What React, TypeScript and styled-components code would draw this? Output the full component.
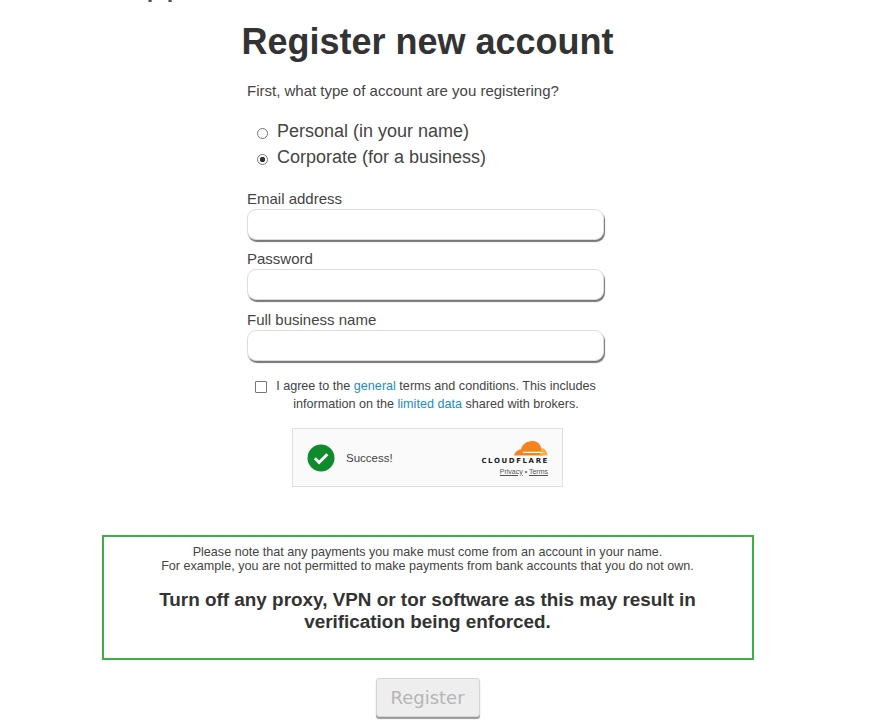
import React from 'react';
import styled, {createGlobalStyle} from "styled-components";

const GlobalStyle = createGlobalStyle`
  html, body {
    margin: 0;
    padding: 0;
    height: 100%;
    overflow: hidden;
    background: #fff;
    font-family: "Liberation Sans", Arial, sans-serif;
    color: #444;
  }
`

function CloudflareLogo() {
    return (
        <svg width="34" height="17" viewBox="0 0 34 17" aria-hidden="true">
            <path fill="#f6821f" d="M0 15.500C1 12 4 9.500 7 9.500 8 4.500 13 1 18 1c5 0 8 2.500 9 6.500L29 15.500z"/>
            <path fill="#fbad41" d="M27 8c3.500 0 6.200 3 6.600 7.500h-8c1-2.500 1.600-5 1.400-7.500z"/>
            <path fill="#fff" d="M9 11.700h17l4 .6-4 .6H9z"/>
        </svg>
    )
}

function CheckBadge() {
    return (
        <svg width="28" height="28" viewBox="0 0 28 28" aria-hidden="true">
            <circle cx="14" cy="14" r="13.500" fill="#0f8a2c"/>
            <path d="M7.800 14.300l4.300 4.200 8.300-8.300" fill="none" stroke="#fff" strokeWidth="3"/>
        </svg>
    )
}

function App() {
    return (
        <>
            <GlobalStyle/>
            <Page>
                <ClippedLine>pp</ClippedLine>
                <Title>Register new account</Title>
                <Form>
                    <Question>First, what type of account are you registering?</Question>
                    <RadioGroup>
                        <RadioRow>
                            <Radio type="radio" name="kind"/>
                            Personal (in your name)
                        </RadioRow>
                        <RadioRow>
                            <Radio type="radio" name="kind" defaultChecked/>
                            Corporate (for a business)
                        </RadioRow>
                    </RadioGroup>
                    <Field>
                        <FieldLabel>Email address</FieldLabel>
                        <TextInput type="email"/>
                    </Field>
                    <Field>
                        <FieldLabel>Password</FieldLabel>
                        <TextInput type="password"/>
                    </Field>
                    <Field>
                        <FieldLabel>Full business name</FieldLabel>
                        <TextInput type="text"/>
                    </Field>
                    <Terms>
                        <TermsCheck type="checkbox"/>
                        <TermsText>
                            I agree to the <TermsLink href="#">general</TermsLink> terms and conditions. This includes<br/>
                            information on the <TermsLink href="#">limited data</TermsLink> shared with brokers.
                        </TermsText>
                    </Terms>
                </Form>
                <Turnstile>
                    <CheckBadge/>
                    <SuccessText>Success!</SuccessText>
                    <Brand>
                        <CloudflareLogo/>
                        <BrandName>CLOUDFLARE</BrandName>
                        <BrandLinks><u>Privacy</u> • <u>Terms</u></BrandLinks>
                    </Brand>
                </Turnstile>
                <Note>
                    <NoteText>
                        Please note that any payments you make must come from an account in your name.<br/>
                        For example, you are not permitted to make payments from bank accounts that you do not own.
                    </NoteText>
                    <NoteWarning>Turn off any proxy, VPN or tor software as this may result in verification being enforced.</NoteWarning>
                </Note>
                <SubmitButton disabled>Register</SubmitButton>
            </Page>
        </>
    );
}

const Page = styled.div`
  width: 855px;
  height: 724px;
  overflow: hidden;
  display: flex;
  flex-direction: column;
  align-items: center;
`

const ClippedLine = styled.div`
  align-self: flex-start;
  height: 0;
  margin: -18px 0 0 146px;
  font-size: 36px;
  line-height: 0;
  color: #555;
`

const Title = styled.h1`
  margin: 39px 0 0;
  font-size: 36px;
  line-height: 41px;
  font-weight: bold;
  color: #333;
`

const Form = styled.div`
  width: 358px;
  margin-right: 3px;
`

const Question = styled.div`
  margin-top: 20px;
  font-size: 15px;
  line-height: 18px;
`

const RadioGroup = styled.div`
  margin-top: 18px;
  padding: 0 0 9px 10px;
`

const RadioRow = styled.label`
  display: flex;
  align-items: center;
  height: 26px;
  font-size: 18px;
`

const Radio = styled.input`
  appearance: none;
  box-sizing: border-box;
  width: 11px;
  height: 11px;
  margin: 5px 9px 0 0;
  border: 1px solid #767676;
  border-radius: 50%;
  background: #fff;
  &:checked {
    background: radial-gradient(circle, #333 0 2.500px, #fff 3px);
  }
`

const Field = styled.div`
  margin-top: 10.5px;
`

const FieldLabel = styled.div`
  font-size: 15px;
  line-height: 17px;
`

const TextInput = styled.input`
  display: block;
  box-sizing: border-box;
  width: 357px;
  height: 31px;
  margin-top: 2px;
  border: 1px solid #ddd;
  border-radius: 9px;
  background: #fff;
  box-shadow: 1px 2px 1px #777;
  outline: none;
`

const Terms = styled.div`
  display: flex;
  align-items: flex-start;
  margin-top: 16px;
  padding-left: 8px;
`

const TermsCheck = styled.input`
  appearance: none;
  box-sizing: border-box;
  flex: none;
  width: 12px;
  height: 12px;
  margin: 4px 9px 0 0;
  border: 1px solid #767676;
  border-radius: 1px;
  background: #fff;
`

const TermsText = styled.div`
  width: 320px;
  font-size: 12.6px;
  line-height: 18px;
  white-space: nowrap;
  text-align: center;
`

const TermsLink = styled.a`
  color: #1b8ccb;
  text-decoration: none;
`

const Turnstile = styled.div`
  box-sizing: border-box;
  width: 271px;
  height: 59px;
  margin-top: 15px;
  padding: 2px 14px 0;
  display: flex;
  align-items: center;
  gap: 11px;
  background: #fafafa;
  border: 1px solid #e0e0e0;
  font-size: 11.5px;
`

const SuccessText = styled.span`
  color: #444;
`

const Brand = styled.div`
  margin-left: auto;
  display: flex;
  flex-direction: column;
  align-items: flex-end;
`

const BrandName = styled.div`
  font-family: "DejaVu Sans", sans-serif;
  font-size: 7px;
  line-height: 9px;
  font-weight: bold;
  letter-spacing: 1.6px;
  margin-right: -1px;
  color: #222;
`

const BrandLinks = styled.div`
  margin-top: 1px;
  font-size: 7px;
  line-height: 10px;
  color: #555;
`

const Note = styled.div`
  box-sizing: border-box;
  width: 652px;
  height: 125px;
  margin-top: 48px;
  padding-top: 8px;
  border: 2px solid #3cb043;
  text-align: center;
`

const NoteText = styled.div`
  font-size: 12.6px;
  line-height: 14px;
`

const NoteWarning = styled.div`
  width: 560px;
  margin: 16px auto 0;
  font-size: 18.9px;
  line-height: 22px;
  font-weight: bold;
  color: #333;
`

const SubmitButton = styled.button`
  box-sizing: border-box;
  width: 104px;
  height: 39px;
  margin-top: 18px;
  border: 1px solid #d5d5d5;
  border-radius: 3px;
  background: #eee;
  box-shadow: 0 2px 1px #999;
  font-family: "DejaVu Sans", sans-serif;
  font-size: 18px;
  color: #b5b5b5;
`

export default App;
